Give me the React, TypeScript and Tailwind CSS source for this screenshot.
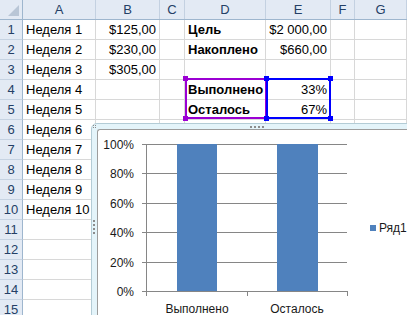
import React from 'react';

const cols = [
  { key: 'A', w: 'w-[73px]' },
  { key: 'B', w: 'w-[64px]' },
  { key: 'C', w: 'w-[25px]' },
  { key: 'D', w: 'w-[81px]' },
  { key: 'E', w: 'w-[65px]' },
  { key: 'F', w: 'w-[24px]' },
  { key: 'G', w: 'flex-1' },
];

type Cell = { text: string; align?: 'left' | 'right'; bold?: boolean };

const data: Record<number, Record<string, Cell>> = {
  1: { A: { text: 'Неделя 1' }, B: { text: '$125,00', align: 'right' }, D: { text: 'Цель', bold: true }, E: { text: '$2 000,00', align: 'right' } },
  2: { A: { text: 'Неделя 2' }, B: { text: '$230,00', align: 'right' }, D: { text: 'Накоплено', bold: true }, E: { text: '$660,00', align: 'right' } },
  3: { A: { text: 'Неделя 3' }, B: { text: '$305,00', align: 'right' } },
  4: { A: { text: 'Неделя 4' }, D: { text: 'Выполнено', bold: true }, E: { text: '33%', align: 'right' } },
  5: { A: { text: 'Неделя 5' }, D: { text: 'Осталось', bold: true }, E: { text: '67%', align: 'right' } },
  6: { A: { text: 'Неделя 6' } },
  7: { A: { text: 'Неделя 7' } },
  8: { A: { text: 'Неделя 8' } },
  9: { A: { text: 'Неделя 9' } },
  10: { A: { text: 'Неделя 10' } },
};

const rows = Array.from({ length: 15 }, (_, i) => i + 1);
const grid = [0, 1, 2, 3, 4, 5].map((i) => 144 + 29.4 * i);
const yLabels = ['100%', '80%', '60%', '40%', '20%', '0%'];

// range highlight with corner handles
function Range({ className, color }: { className: string; color: string }) {
  return (
    <div className={`absolute border-2 ${className}`}>
      <div className={`absolute -left-[4px] -top-[4px] w-[5px] h-[5px] ${color}`} />
      <div className={`absolute -right-[4px] -top-[4px] w-[5px] h-[5px] ${color}`} />
      <div className={`absolute -left-[4px] -bottom-[4px] w-[5px] h-[5px] ${color}`} />
      <div className={`absolute -right-[4px] -bottom-[4px] w-[5px] h-[5px] ${color}`} />
    </div>
  );
}

function Chart() {
  return (
    <div className="absolute left-[91px] top-[123px] w-[340px] h-[200px] border border-[#b3ccd6] rounded-tl-[6px] bg-[#e4f4fa] pl-[5px] pt-[5px]">
      {/* grip dots */}
      <div className="absolute left-[1px] top-[1px] grid grid-cols-2 gap-[1px]">
        <span className="w-[1px] h-[1px] bg-[#8c8c8c]" />
        <span className="w-[1px] h-[1px] bg-[#8c8c8c]" />
        <span className="w-[1px] h-[1px] bg-[#8c8c8c]" />
        <span className="w-[1px] h-[1px] bg-[#8c8c8c]" />
      </div>
      <div className="absolute left-[158px] top-[2px] flex gap-[2px]">
        {[0, 1, 2, 3].map((i) => (
          <span key={i} className="w-[2px] h-[2px] bg-[#8c8c8c]" />
        ))}
      </div>
      <div className="absolute left-[1px] top-[96px] flex flex-col gap-[2px]">
        {[0, 1, 2, 3].map((i) => (
          <span key={i} className="w-[2px] h-[2px] bg-[#8c8c8c]" />
        ))}
      </div>
      <div className="w-full h-full bg-white border-l border-t border-[#9d9d9d] rounded-tl-[3px] overflow-hidden">
        <svg width="335" height="195" viewBox="97 130 335 195" className="block" style={{ fontFamily: '"Liberation Sans", Arial, sans-serif' }}>
          {grid.map((y, i) => (
            <line key={i} x1={141} x2={346} y1={Math.round(y) + 0.5} y2={Math.round(y) + 0.5} stroke="#868686" strokeWidth={1} />
          ))}
          <line x1={145.5} x2={145.5} y1={144} y2={296} stroke="#868686" />
          <line x1={246.5} x2={246.5} y1={291} y2={296} stroke="#868686" />
          <line x1={346.5} x2={346.5} y1={291} y2={296} stroke="#868686" />
          <rect x={176} y={144} width={40} height={147} fill="#4f81bd" />
          <rect x={276} y={144} width={41} height={147} fill="#4f81bd" />
          {grid.map((y, i) => (
            <text key={i} x={133} y={Math.round(y) + 4.5} textAnchor="end" fontSize="12" fill="#1a1a1a">
              {yLabels[i]}
            </text>
          ))}
          <text x={196} y={313} textAnchor="middle" fontSize="12" fill="#1a1a1a">Выполнено</text>
          <text x={296} y={313} textAnchor="middle" fontSize="12" fill="#1a1a1a">Осталось</text>
          <rect x={369} y={225} width={6} height={6} fill="#4f81bd" />
          <text x={378} y={232} fontSize="12" fill="#1a1a1a">Ряд1</text>
        </svg>
      </div>
    </div>
  );
}

export default function App() {
  return (
    <div className="relative w-[407px] h-[315px] overflow-hidden bg-white text-[13px] text-black" style={{ fontFamily: '"Liberation Sans", Arial, sans-serif' }}>
      {/* Column headers */}
      <div className="flex h-[20px] bg-[#e3eaf4] border-b border-[#9eb6ce] text-[#243f66]">
        <div className="relative w-[23px] border-r border-[#9eb6ce] bg-[#e3eaf4]">
          <div className="absolute right-[3px] bottom-[3px] w-0 h-0 border-l-[11px] border-l-transparent border-b-[11px] border-b-[#b9c6d6]" />
        </div>
        {cols.map((c) => (
          <div key={c.key} className={`${c.w} border-r border-[#c4d1e1] flex items-center justify-center leading-none`}>
            {c.key}
          </div>
        ))}
      </div>

      {/* Rows */}
      {rows.map((r) => (
        <div key={r} className="flex h-[20px]">
          <div className="w-[23px] bg-[#e3eaf4] border-r border-[#9eb6ce] border-b border-b-[#c6d3e2] text-[#243f66] flex items-center justify-center leading-none pb-[1px]">
            {r}
          </div>
          {cols.map((c) => {
            const cell = data[r]?.[c.key];
            return (
              <div
                key={c.key}
                className={`${c.w} border-r border-b border-[#d8d8d8] flex items-center px-[3px] pb-[1px] whitespace-nowrap leading-none ${
                  cell?.align === 'right' ? 'justify-end' : 'justify-start'
                } ${cell?.bold ? 'font-bold' : ''}`}
              >
                {cell?.text}
              </div>
            );
          })}
        </div>
      ))}

      <Range className="left-[185px] top-[78px] w-[82px] h-[41px] border-[#9b00d3]" color="bg-[#9b00d3]" />
      <Range className="left-[266px] top-[78px] w-[65px] h-[41px] border-[#0000ff]" color="bg-[#0000ff]" />

      <Chart />
    </div>
  );
}
